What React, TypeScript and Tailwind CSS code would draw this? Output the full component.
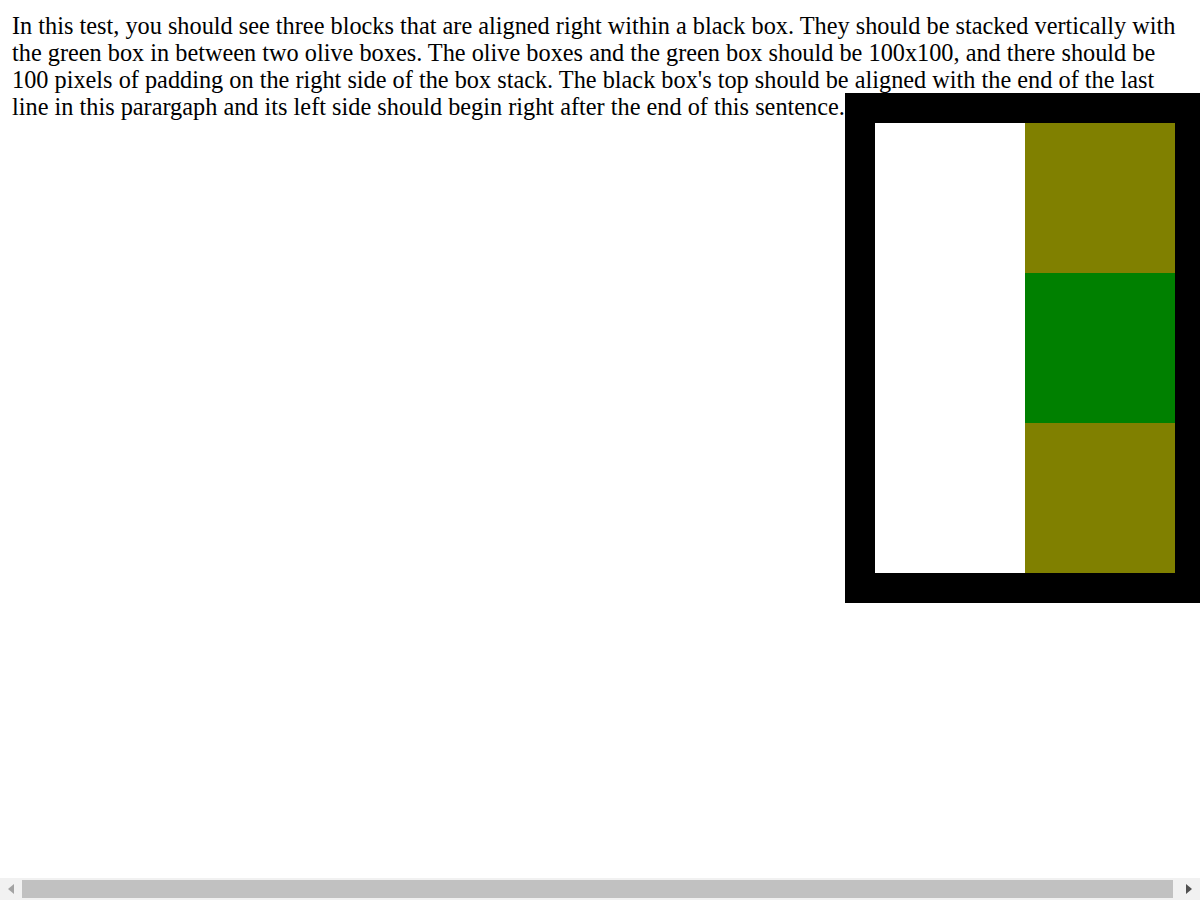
import React from "react";

const App = () => {
  return (
    <div className="flex flex-col h-[900px] overflow-hidden bg-white">
      <div className="flex-1 p-[12px] text-black font-['Liberation_Serif',serif] text-[24.3px] leading-[27px]">
        <p>
          In this test, you should see three blocks that are aligned right within a black box. They should be stacked
          vertically with the green box in between two olive boxes. The olive boxes and the green box should be 100x100,
          and there should be 100 pixels of padding on the right side of the box stack. The black box's top should be
          aligned with the end of the last line in this parargaph and its left side should begin right after the end of
          this sentence.
          <span className="inline-block w-0 align-top">
            {/* black box with the stack */}
            <span className="flex w-[360px] bg-black p-[30px]">
              <span className="block w-[150px] bg-white" />
              <span className="flex flex-col">
                <span className="block w-[150px] h-[150px] bg-[#808000]" />
                <span className="block w-[150px] h-[150px] bg-[#008000]" />
                <span className="block w-[150px] h-[150px] bg-[#808000]" />
              </span>
            </span>
          </span>
        </p>
      </div>

      {/* horizontal scrollbar */}
      <div className="flex h-[22px] shrink-0 items-stretch bg-[#f1f1f1]">
        <div className="flex w-[22px] items-center justify-center">
          <svg width="6" height="10" viewBox="0 0 6 10">
            <path d="M6 0 L0 5 L6 10 Z" fill="#a3a3a3" />
          </svg>
        </div>
        <div className="w-[1151px] py-[2px]">
          <div className="h-full bg-[#c1c1c1]" />
        </div>
        <div className="flex flex-1 items-center justify-end pr-[8px]">
          <svg width="6" height="10" viewBox="0 0 6 10">
            <path d="M0 0 L6 5 L0 10 Z" fill="#505050" />
          </svg>
        </div>
      </div>
    </div>
  );
};

export default App;
